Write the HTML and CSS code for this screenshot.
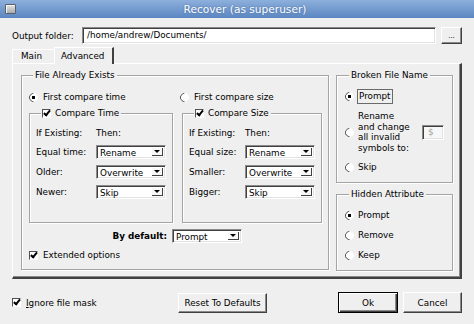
FILE: index.html
```html
<!DOCTYPE html>
<html lang="en">
<head>
    <meta charset="UTF-8">
    <meta name="viewport" content="width=device-width, initial-scale=1.0">
    <title>Recover (as superuser)</title>
    <link rel="stylesheet" href="styles.css">
</head>
<body>
<div class="window">
    <div class="titlebar">
        <span class="win-icon"></span>
        <span class="title">Recover (as superuser)</span>
    </div>

    <div class="dialog">
        <div class="folder-row">
            <span class="folder-label">Output folder:</span>
            <div class="line-edit">/home/andrew/Documents/</div>
            <button class="btn browse">...</button>
        </div>

        <div class="tabs">
            <div class="tab">Main</div>
            <div class="tab active">Advanced</div>
        </div>

        <div class="tab-panel">
            <!-- left: what to do when the file is already there -->
            <fieldset class="group exists">
                <legend>File Already Exists</legend>
                <div class="exists-grid">
                    <div class="option"><span class="radio checked"></span>First compare time</div>
                    <div class="option second"><span class="radio"></span>First compare size</div>

                    <fieldset class="group sub">
                        <legend><span class="check checked"></span>Compare Time</legend>
                        <div class="rules time">
                            <span class="head">If Existing:</span><span class="head">Then:</span>
                            <span>Equal time:</span>
                            <div class="combo"><span class="combo-text">Rename</span><span class="combo-arrow"></span></div>
                            <span>Older:</span>
                            <div class="combo"><span class="combo-text">Overwrite</span><span class="combo-arrow"></span></div>
                            <span>Newer:</span>
                            <div class="combo"><span class="combo-text">Skip</span><span class="combo-arrow"></span></div>
                        </div>
                    </fieldset>

                    <fieldset class="group sub">
                        <legend><span class="check checked"></span>Compare Size</legend>
                        <div class="rules size">
                            <span class="head">If Existing:</span><span class="head">Then:</span>
                            <span>Equal size:</span>
                            <div class="combo"><span class="combo-text">Rename</span><span class="combo-arrow"></span></div>
                            <span>Smaller:</span>
                            <div class="combo"><span class="combo-text">Overwrite</span><span class="combo-arrow"></span></div>
                            <span>Bigger:</span>
                            <div class="combo"><span class="combo-text">Skip</span><span class="combo-arrow"></span></div>
                        </div>
                    </fieldset>
                </div>

                <div class="default-row">
                    <b>By default:</b>
                    <div class="combo"><span class="combo-text">Prompt</span><span class="combo-arrow"></span></div>
                </div>
                <div class="option extended"><span class="check checked"></span>Extended options</div>
            </fieldset>

            <!-- right column -->
            <div class="side">
                <fieldset class="group broken">
                    <legend>Broken File Name</legend>
                    <div class="option"><span class="radio checked"></span><span class="focus">Prompt</span></div>
                    <div class="option rename">
                        <span class="radio"></span>
                        <span class="rename-text">Rename<br>and change<br>all invalid<br>symbols to:</span>
                        <span class="small-edit">$</span>
                    </div>
                    <div class="option"><span class="radio"></span>Skip</div>
                </fieldset>

                <fieldset class="group hidden-attr">
                    <legend>Hidden Attribute</legend>
                    <div class="option"><span class="radio checked"></span>Prompt</div>
                    <div class="option"><span class="radio"></span>Remove</div>
                    <div class="option"><span class="radio"></span>Keep</div>
                </fieldset>
            </div>
        </div>

        <div class="footer">
            <div class="option ignore"><span class="check checked"></span><span><u>I</u>gnore file mask</span></div>
            <button class="btn reset">Reset To Defaults</button>
            <div class="footer-right">
                <button class="btn default ok">Ok</button>
                <button class="btn cancel">Cancel</button>
            </div>
        </div>
    </div>
</div>
</body>
</html>
```

FILE: styles.css
```css
* {
    box-sizing: border-box;
}
body {
    margin: 0;
    font-family: "DejaVu Sans", sans-serif;
    font-size: 8.8px;
    color: #000;
    background: #efefef;
}
.window {
    width: 474px;
    height: 324px;
    background: #efefef;
}
.titlebar {
    height: 18px;
    display: flex;
    align-items: center;
    background: linear-gradient(#8db0dc, #5b86c1);
    color: #fff;
}
.win-icon {
    width: 11px;
    height: 10px;
    margin-left: 5px;
    border: 1px solid #5b5f66;
    border-radius: 1px;
    background: linear-gradient(#e4e4e4, #a9abb0);
    box-shadow: inset 1px 1px 0 #f6f6f6;
}
.title {
    flex: 1;
    text-align: center;
    font-size: 10.6px;
    text-shadow: 0 0 2px #46679a;
}
.dialog {
    padding: 9px 12px 0;
}

/* 3d edges */
.btn {
    font: inherit;
    color: #000;
    padding: 0;
    background: #efefef;
    border: 1px solid;
    border-color: #fff #404040 #404040 #fff;
    box-shadow: inset -1px -1px 0 #8a8a8a;
}
.line-edit, .combo, .small-edit {
    background: #fff;
    border: 1px solid;
    border-color: #8a8a8a #fff #fff #8a8a8a;
    box-shadow: inset 1px 1px 0 #404040, inset -1px -1px 0 #e2e2e2;
}

.folder-row {
    display: flex;
    align-items: center;
    height: 17px;
}
.folder-label {
    width: 70px;
}
.line-edit {
    flex: 1;
    height: 17px;
    line-height: 15px;
    padding-left: 4px;
}
.browse {
    width: 21px;
    height: 17px;
    margin-left: 5px;
    font-size: 7px;
}

.tabs {
    display: flex;
    align-items: flex-end;
    height: 17px;
    margin-top: 2px;
}
.tab {
    height: 14px;
    line-height: 13px;
    padding: 0 12px 0 8px;
    border-top: 1px solid #fff;
    border-left: 1px solid #fff;
}
.tab.active {
    height: 17px;
    line-height: 17px;
    padding: 0 8px 0 6px;
    border-right: 2px solid #404040;
    margin-bottom: -1px;
    background: #efefef;
    position: relative;
}

.tab-panel {
    display: grid;
    grid-template-columns: 308px 117px;
    column-gap: 7px;
    align-items: start;
    height: 216px;
    padding: 6px 7px 0 8px;
    border: 1px solid;
    border-color: #fff #404040 #404040 #fff;
    border-width: 1px 2px 2px 1px;
    box-shadow: inset -1px -1px 0 #8a8a8a;
}

/* group boxes */
.group {
    margin: 0;
    padding: 0;
    min-width: 0;
    border: 1px solid #a4a4a4;
    box-shadow: inset 1px 1px 0 #fff, 1px 1px 0 #fff;
}
.group legend {
    padding: 0 2px;
    margin-left: 4px;
    line-height: 11px;
    background: #efefef;
}
.exists {
    height: 200px;
    padding: 10px 6px 0 7px;
}
.exists-grid {
    display: grid;
    grid-template-columns: 144px 140px;
    column-gap: 9px;
    row-gap: 5px;
}
.option {
    display: flex;
    align-items: center;
    gap: 5px;
    height: 12px;
}
.option.second {
    margin-left: -2px;
}
.sub {
    height: 115px;
    padding: 4px 0 0 6px;
}
.sub legend {
    display: flex;
    align-items: center;
    gap: 4px;
    margin-left: 5px;
    padding: 0 2px 0 1px;
}
.rules {
    display: grid;
    grid-template-rows: 16px;
    grid-auto-rows: 14px;
    row-gap: 6px;
    align-items: center;
}
.rules .head {
    align-self: end;
    line-height: 11px;
}
.rules.time {
    grid-template-columns: 60px 70px;
}
.rules.size {
    grid-template-columns: 56px 70px;
}
.default-row {
    display: grid;
    grid-template-columns: 138px 70px;
    column-gap: 5px;
    align-items: center;
    margin-top: 6px;
}
.default-row b {
    text-align: right;
}
.extended {
    margin-top: 6px;
}

/* combo box */
.combo {
    display: flex;
    height: 14px;
    padding: 2px 2px 2px 2px;
}
.combo-text {
    flex: 1;
    line-height: 10px;
    padding-left: 1px;
}
.combo-arrow {
    width: 11px;
    display: flex;
    align-items: center;
    justify-content: center;
    background: #f7f7f7;
    border-right: 1px solid #404040;
    border-bottom: 1px solid #404040;
}
.combo-arrow::after {
    content: "";
    border-left: 3px solid transparent;
    border-right: 3px solid transparent;
    border-top: 3px solid #000;
}

/* radios and checks */
.radio {
    flex: none;
    display: inline-block;
    width: 9px;
    height: 9px;
    border-radius: 50%;
    border: 1px solid;
    border-color: #505050 #fff #fff #505050;
    background: #fff;
    transform: rotate(-45deg);
}
.radio.checked {
    background: radial-gradient(circle, #000 0 1.4px, #fff 2px);
}
.check {
    flex: none;
    display: inline-block;
    position: relative;
    width: 9px;
    height: 9px;
    border: 1px solid;
    border-color: #505050 #fff #fff #505050;
    background: #fff;
}
.check.checked::after {
    content: "";
    position: absolute;
    left: 2px;
    top: -1px;
    width: 2px;
    height: 5px;
    border: solid #000;
    border-width: 0 2px 2px 0;
    transform: rotate(40deg);
}

/* right column */
.side {
    display: flex;
    flex-direction: column;
    gap: 6px;
}
.broken {
    height: 113px;
    padding: 8px 0 0 8px;
}
.broken .option {
    gap: 4px;
}
.focus {
    border: 1px solid #6a6a6a;
    padding: 1px 1px;
    line-height: 11px;
    margin-left: -1px;
}
.broken .option:first-child, .broken .option:nth-child(2) {
    height: 15px;
}
.option.rename {
    height: 42px;
    margin-top: 7px;
}
.rename-text {
    line-height: 10.5px;
    width: 60px;
}
.small-edit {
    width: 22px;
    height: 15px;
    line-height: 13px;
    padding-left: 5px;
    color: #a0a0a0;
    background: #f7f7f7;
}
.broken .option:last-child {
    margin-top: 8px;
}
.hidden-attr {
    height: 82px;
    padding: 9px 0 0 8px;
}
.hidden-attr .option {
    gap: 4px;
    margin-bottom: 8px;
}

.footer {
    display: flex;
    align-items: center;
    margin-top: 13px;
    height: 21px;
}
.ignore {
    width: 166px;
    gap: 5px;
}
.reset {
    width: 89px;
    height: 20px;
}
.footer-right {
    margin-left: auto;
    display: flex;
    gap: 5px;
}
.ok {
    width: 60px;
    height: 21px;
}
.btn.default {
    border: 1px solid #000;
    box-shadow: inset 1px 1px 0 #fff, inset -1px -1px 0 #404040, inset -2px -2px 0 #8a8a8a;
}
.cancel {
    width: 59px;
    height: 21px;
}
```
